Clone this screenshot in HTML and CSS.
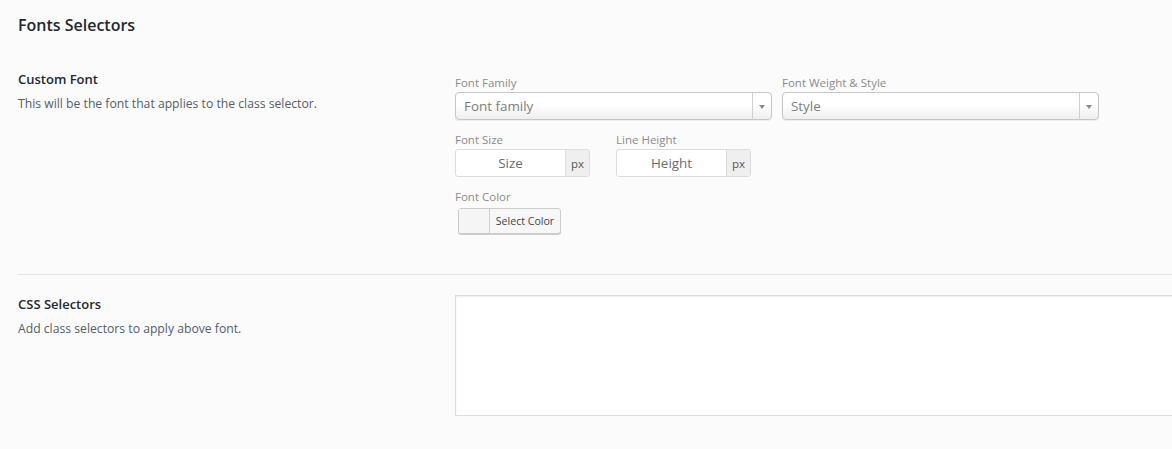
FILE: index.html
```html
<!DOCTYPE html>
<html>
<head>
<meta charset="utf-8">
<link rel="stylesheet" href="styles.css">
</head>
<body>
<div class="page">
  <h2 class="title">Fonts Selectors</h2>
  <div class="row row-first">
    <div class="info">
      <div class="info-title">Custom Font</div>
      <div class="info-desc">This will be the font that applies to the class selector.</div>
    </div>
    <div class="fields">
      <div class="line">
        <div class="field">
          <div class="label">Font Family</div>
          <div class="select select-family"><span class="select-text">Font family</span><span class="select-arrow"><span class="tri"></span></span></div>
        </div>
        <div class="field">
          <div class="label">Font Weight &amp; Style</div>
          <div class="select select-style"><span class="select-text">Style</span><span class="select-arrow"><span class="tri"></span></span></div>
        </div>
      </div>
      <div class="line">
        <div class="field">
          <div class="label">Font Size</div>
          <div class="group"><span class="group-input">Size</span><span class="addon">px</span></div>
        </div>
        <div class="field field-lh">
          <div class="label">Line Height</div>
          <div class="group"><span class="group-input">Height</span><span class="addon">px</span></div>
        </div>
      </div>
      <div class="line">
        <div class="field">
          <div class="label">Font Color</div>
          <div class="color-btn"><span class="swatch"></span><span class="color-text">Select Color</span></div>
        </div>
      </div>
    </div>
  </div>
  <div class="divider"></div>
  <div class="row row-second">
    <div class="info">
      <div class="info-title">CSS Selectors</div>
      <div class="info-desc">Add class selectors to apply above font.</div>
    </div>
    <div class="fields fields-wide">
      <div class="textarea"></div>
    </div>
  </div>
</div>
</body>
</html>
```
FILE: styles.css
```css
html, body {
  margin: 0;
  padding: 0;
  background: #fbfbfb;
  overflow: hidden;
}
body {
  font-family: "Open Sans", "Noto Sans", sans-serif;
  color: #23282d;
  width: 1172px;
  height: 449px;
}
.page {
  padding: 0 0 0 18px;
}
.title {
  margin: 0;
  padding-top: 13px;
  font-size: 16px;
  font-weight: 600;
  line-height: 24px;
  color: #23282d;
}
.row {
  display: flex;
}
.row-first {
  padding-top: 30px;
}
.info {
  width: 437px;
  flex: none;
}
.info-title {
  font-size: 13px;
  font-weight: 600;
  line-height: 20px;
  padding-top: 2px;
}
.info-desc {
  font-size: 12.2px;
  line-height: 20px;
  color: #555d66;
  margin-top: 5px;
}
.fields {
  flex: 1;
  padding-top: 6px;
}
.line {
  display: flex;
  margin-bottom: 10px;
}
.field {
  margin-right: 10px;
}
.field-lh {
  margin-left: 16px;
}
.label {
  font-size: 11.5px;
  line-height: 16px;
  color: #8b8b8b;
  height: 17px;
  padding-top: 2px;
}
.select {
  display: flex;
  box-sizing: border-box;
  height: 28px;
  border: 1px solid #c6c6c6;
  border-radius: 4px;
  background: linear-gradient(#ffffff 45%, #eeeeee);
  box-shadow: 0 1px 1px rgba(0,0,0,0.06);
}
.select-family { width: 317px; }
.select-style { width: 317px; }
.select-text {
  flex: 1;
  font-size: 13.4px;
  line-height: 26px;
  color: #7d7d7d;
  padding-left: 8px;
}
.select-arrow {
  width: 18px;
  border-left: 1px solid #cfcfcf;
  display: flex;
  align-items: center;
  justify-content: center;
}
.tri {
  width: 0;
  height: 0;
  border-left: 3px solid transparent;
  border-right: 3px solid transparent;
  border-top: 4px solid #888;
  margin-top: 1px;
}
.group {
  display: flex;
  box-sizing: border-box;
  width: 135px;
  height: 28px;
  border: 1px solid #dcdcdc;
  border-radius: 3px;
  background: #fff;
  overflow: hidden;
}
.group-input {
  flex: 1;
  text-align: center;
  font-size: 13.4px;
  line-height: 26px;
  color: #6a6a6a;
}
.addon {
  width: 23px;
  background: #efefef;
  border-left: 1px solid #dcdcdc;
  font-size: 11.5px;
  line-height: 28px;
  text-align: center;
  color: #555;
}
.color-btn {
  display: flex;
  box-sizing: border-box;
  width: 103px;
  height: 26px;
  margin-left: 3px;
  margin-top: 2px;
  border: 1px solid #cccccc;
  border-radius: 3px;
  background: #f7f7f7;
  box-shadow: 0 1px 0 #cccccc;
}
.swatch {
  width: 30px;
  border-right: 1px solid #d0d0d0;
  background: #f5f5f5;
}
.color-text {
  flex: 1;
  font-size: 10.6px;
  line-height: 24px;
  color: #444;
  text-align: center;
}
.divider {
  height: 1px;
  background: #e5e5e5;
  margin-top: 30px;
}
.row-second {
  padding-top: 20px;
}
.row-second .info-title {
  padding-top: 0;
  margin-top: -1px;
}
.row-second .fields {
  padding-top: 0;
}
.textarea {
  box-sizing: border-box;
  height: 121px;
  margin-right: -10px;
  border: 1px solid #dddddd;
  background: #fff;
  box-shadow: inset 0 1px 2px rgba(0,0,0,0.07);
}
```
